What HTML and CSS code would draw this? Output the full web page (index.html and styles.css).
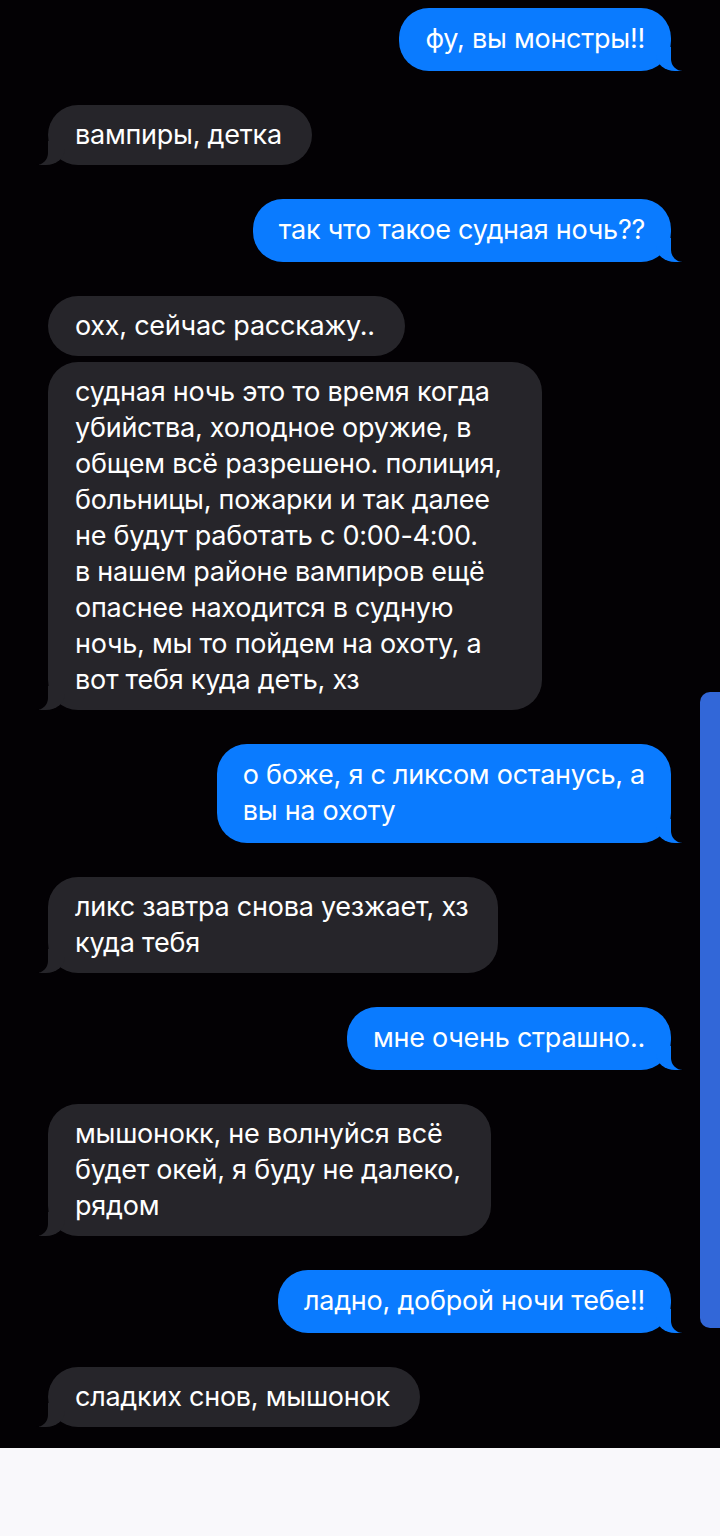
FILE: index.html
```html
<!DOCTYPE html>
<html lang="ru">
<head>
  <meta charset="UTF-8">
  <title>Сообщения</title>
  <link rel="stylesheet" href="styles.css">
</head>
<body>
  <div class="chat">
    <div class="msg sent tail">фу, вы монстры!!</div>
    <div class="msg got tail gap">вампиры, детка</div>
    <div class="msg sent tail gap">так что такое судная ночь??</div>
    <div class="msg got gap">охх, сейчас расскажу..</div>
    <div class="msg got tail near long">судная ночь это то время когда<br>убийства, холодное оружие, в<br>общем всё разрешено. полиция,<br>больницы, пожарки и так далее<br>не будут работать с 0:00-4:00.<br>в нашем районе вампиров ещё<br>опаснее находится в судную<br>ночь, мы то пойдем на охоту, а<br>вот тебя куда деть, хз</div>
    <div class="msg sent tail gap">о боже, я с ликсом останусь, а<br>вы на охоту</div>
    <div class="msg got tail gap">ликс завтра снова уезжает, хз<br>куда тебя</div>
    <div class="msg sent tail gap">мне очень страшно..</div>
    <div class="msg got tail gap">мышонокк, не волнуйся всё<br>будет окей, я буду не далеко,<br>рядом</div>
    <div class="msg sent tail gap">ладно, доброй ночи тебе!!</div>
    <div class="msg got tail gap">сладких снов, мышонок</div>

    <div class="scrollbar"></div>
  </div>
  <div class="bottom"></div>
</body>
</html>
```

FILE: styles.css
```css
body {
  margin: 0;
  background-color: #f9f8fb;
  font-family: Inter, "Noto Sans", sans-serif;
}

.chat {
  position: relative;
  height: 1448px;
  box-sizing: border-box;
  padding: 8px 49px 0 48px;
  background-color: #030104;
  display: flex;
  flex-direction: column;
  align-items: flex-start;
}

.msg {
  position: relative;
  padding: 12px 26px;
  border-radius: 30px;
  font-size: 27px;
  line-height: 36px;
  letter-spacing: -0.25px;
  color: #fff;
}

.sent {
  align-self: flex-end;
  padding-top: 13px;
  padding-bottom: 14px;
  background-color: #0a7bff;
}

.got {
  padding-left: 27px;
  padding-right: 30px;
  background-color: #26252a;
}

.got.long {
  padding-right: 40px;
}

.gap {
  margin-top: 34px;
}

.near {
  margin-top: 6px;
}

/* хвостики у пузырей */
.tail::before,
.tail::after {
  content: "";
  position: absolute;
  bottom: 0;
  height: 24px;
}

.sent.tail::before {
  right: -11px;
  width: 26px;
  background-color: #0a7bff;
  border-bottom-left-radius: 19px 16px;
}

.sent.tail::after {
  right: -30px;
  width: 30px;
  background-color: #030104;
  border-bottom-left-radius: 12px;
}

.got.tail::before {
  left: -9px;
  width: 26px;
  background-color: #26252a;
  border-bottom-right-radius: 19px 16px;
}

.got.tail::after {
  left: -30px;
  width: 30px;
  background-color: #030104;
  border-bottom-right-radius: 12px;
}

.scrollbar {
  position: absolute;
  right: 0;
  top: 692px;
  width: 20px;
  height: 636px;
  background-color: #3267d8;
  border-radius: 10px 0 0 10px;
}

.bottom {
  height: 88px;
}
```
